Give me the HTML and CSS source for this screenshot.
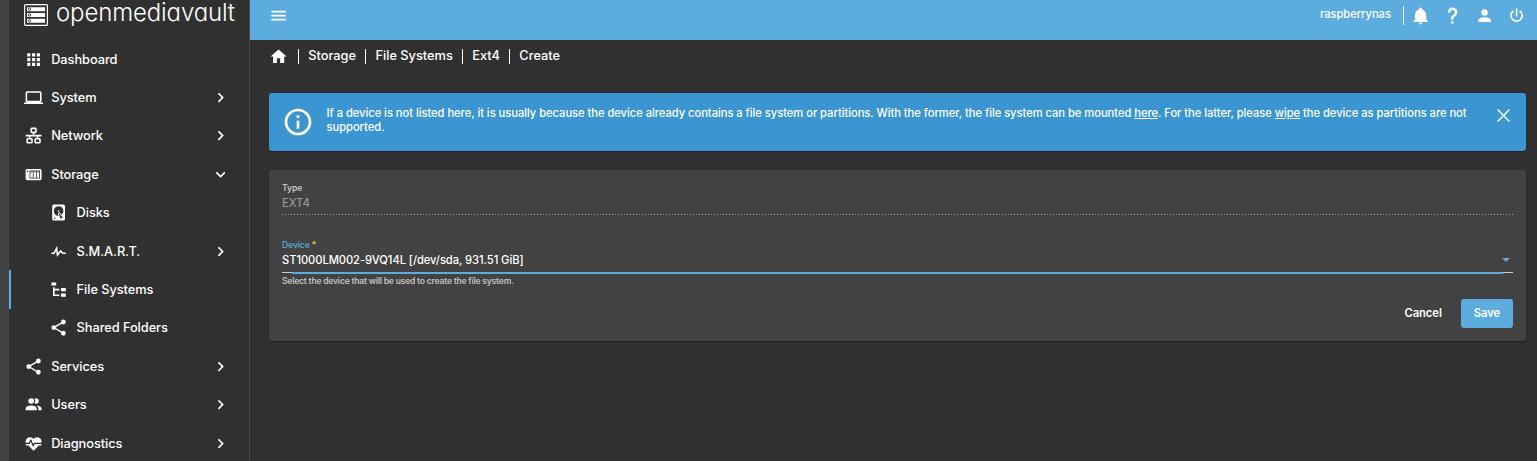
FILE: index.html
```
<!DOCTYPE html>
<html lang="en">
<head>
<meta charset="utf-8">
<title>openmediavault</title>
<link rel="stylesheet" href="styles.css">
</head>
<body>
<div class="app">
  <nav class="sidebar">
    <div class="logo">
      <svg class="logo-mark" viewBox="0 0 24 22"><rect x=".6" y=".6" width="22.8" height="20.8" rx="1" fill="none" stroke="#fff" stroke-width="1.200"/><path fill="#fff" d="M3 3.200h18v4H3zM3 9h18v4H3zM3 14.800h18v4H3z"/><g fill="#fff" stroke="#303030" stroke-width=".9"><circle cx="5.500" cy="5.200" r="1.200"/><circle cx="5.500" cy="11" r="1.200"/><circle cx="5.500" cy="16.800" r="1.200"/></g></svg>
      <span class="logo-text">openmediavault</span>
    </div>
    <a class="item"><svg class="icon" viewBox="0 0 24 24"><path d="M16,20H20V16H16M16,14H20V10H16M10,8H14V4H10M16,8H20V4H16M10,14H14V10H10M4,14H8V10H4M4,20H8V16H4M10,20H14V16H10M4,8H8V4H4V8Z"/></svg><span>Dashboard</span></a>
    <a class="item"><svg class="icon" viewBox="0 0 24 24"><path d="M4,6H20V16H4M20,18A2,2 0 0,0 22,16V6C22,4.890 21.100,4 20,4H4C2.890,4 2,4.890 2,6V16A2,2 0 0,0 4,18H0V20H24V18H20Z"/></svg><span>System</span><svg class="chev" viewBox="0 0 24 24"><path d="M8.590,16.580L13.170,12L8.590,7.410L10,6L16,12L10,18L8.590,16.580Z"/></svg></a>
    <a class="item"><svg class="icon" viewBox="0 0 24 24"><path d="M10,2C8.890,2 8,2.890 8,4V7C8,8.110 8.890,9 10,9H11V11H2V13H6V15H5C3.890,15 3,15.890 3,17V20C3,21.110 3.890,22 5,22H9C10.110,22 11,21.110 11,20V17C11,15.890 10.110,15 9,15H8V13H16V15H15C13.890,15 13,15.890 13,17V20C13,21.110 13.890,22 15,22H19C20.110,22 21,21.110 21,20V17C21,15.890 20.110,15 19,15H18V13H22V11H13V9H14C15.110,9 16,8.110 16,7V4C16,2.890 15.110,2 14,2H10M10,4H14V7H10V4M5,17H9V20H5V17M15,17H19V20H15V17Z"/></svg><span>Network</span><svg class="chev" viewBox="0 0 24 24"><path d="M8.590,16.580L13.170,12L8.590,7.410L10,6L16,12L10,18L8.590,16.580Z"/></svg></a>
    <a class="item"><svg class="icon" viewBox="0 0 24 24"><path fill-rule="evenodd" d="M4,5C2.890,5 2,5.890 2,7V17C2,18.110 2.890,19 4,19H20C21.110,19 22,18.110 22,17V7C22,5.890 21.110,5 20,5H4M4.500,7A1,1 0 0,1 5.500,8A1,1 0 0,1 4.500,9A1,1 0 0,1 3.500,8A1,1 0 0,1 4.500,7M7,7H20V17H7V7M8,8V16H11V8H8M12,8V16H15V8H12M16,8V16H19V8H16M9,9H10V10H9V9M13,9H14V10H13V9M17,9H18V10H17V9Z"/></svg><span>Storage</span><svg class="chev" viewBox="0 0 24 24"><path d="M7.410,8.580L12,13.170L16.590,8.580L18,10L12,16L6,10L7.410,8.580Z"/></svg></a>
    <a class="item sub"><svg class="icon" viewBox="0 0 24 24"><path d="M6,2H18A2,2 0 0,1 20,4V20A2,2 0 0,1 18,22H6A2,2 0 0,1 4,20V4A2,2 0 0,1 6,2M12,4A6,6 0 0,0 6,10C6,13.310 8.690,16 12.100,16L11.220,13.770C10.950,13.290 11.110,12.680 11.590,12.400L12.450,11.900C12.930,11.630 13.540,11.790 13.820,12.270L15.740,14.690C17.120,13.590 18,11.900 18,10A6,6 0 0,0 12,4M12,9A1,1 0 0,1 13,10A1,1 0 0,1 12,11A1,1 0 0,1 11,10A1,1 0 0,1 12,9M7,18A1,1 0 0,0 6,19A1,1 0 0,0 7,20A1,1 0 0,0 8,19A1,1 0 0,0 7,18M12.090,13.270L14.580,19.580L17.170,18.080L12.950,12.770L12.090,13.270Z"/></svg><span>Disks</span></a>
    <a class="item sub"><svg class="icon" viewBox="0 0 24 24"><path d="M3,13H5.790L10.100,4.790L11.280,13.750L14.500,9.660L17.830,13H21V15H17L14.670,12.670L9.920,18.730L8.940,11.310L7,15H3V13Z"/></svg><span>S.M.A.R.T.</span><svg class="chev" viewBox="0 0 24 24"><path d="M8.590,16.580L13.170,12L8.590,7.410L10,6L16,12L10,18L8.590,16.580Z"/></svg></a>
    <a class="item sub active"><svg class="icon" viewBox="0 0 24 24"><path d="M3,3H9V7H3V3M15,10H21V14H15V10M15,17H21V21H15V17M13,13H7V18H13V20H7L5,20V9H7V11H13V13Z"/></svg><span>File Systems</span></a>
    <a class="item sub"><svg class="icon" viewBox="0 0 24 24"><path d="M18,16.080C17.240,16.080 16.560,16.380 16.040,16.850L8.910,12.700C8.960,12.470 9,12.240 9,12C9,11.760 8.960,11.530 8.910,11.300L15.960,7.190C16.500,7.690 17.210,8 18,8A3,3 0 0,0 21,5A3,3 0 0,0 18,2A3,3 0 0,0 15,5C15,5.240 15.040,5.470 15.090,5.700L8.040,9.810C7.500,9.310 6.790,9 6,9A3,3 0 0,0 3,12A3,3 0 0,0 6,15C6.790,15 7.500,14.690 8.040,14.190L15.160,18.340C15.110,18.550 15.080,18.770 15.080,19C15.080,20.610 16.390,21.910 18,21.910C19.610,21.910 20.920,20.610 20.920,19A2.920,2.920 0 0,0 18,16.080Z"/></svg><span>Shared Folders</span></a>
    <a class="item"><svg class="icon" viewBox="0 0 24 24"><path d="M18,16.080C17.240,16.080 16.560,16.380 16.040,16.850L8.910,12.700C8.960,12.470 9,12.240 9,12C9,11.760 8.960,11.530 8.910,11.300L15.960,7.190C16.500,7.690 17.210,8 18,8A3,3 0 0,0 21,5A3,3 0 0,0 18,2A3,3 0 0,0 15,5C15,5.240 15.040,5.470 15.090,5.700L8.040,9.810C7.500,9.310 6.790,9 6,9A3,3 0 0,0 3,12A3,3 0 0,0 6,15C6.790,15 7.500,14.690 8.040,14.190L15.160,18.340C15.110,18.550 15.080,18.770 15.080,19C15.080,20.610 16.390,21.910 18,21.910C19.610,21.910 20.920,20.610 20.920,19A2.920,2.920 0 0,0 18,16.080Z"/></svg><span>Services</span><svg class="chev" viewBox="0 0 24 24"><path d="M8.590,16.580L13.170,12L8.590,7.410L10,6L16,12L10,18L8.590,16.580Z"/></svg></a>
    <a class="item"><svg class="icon" viewBox="0 0 24 24"><path d="M16 17V19H2V17S2 13 9 13 16 17 16 17M12.500 7.500A3.500 3.500 0 1 0 9 11A3.500 3.500 0 0 0 12.500 7.500M15.940 13A5.320 5.320 0 0 1 18 17V19H22V17S22 13.370 15.940 13M15 4A3.390 3.390 0 0 0 13.070 4.590A5 5 0 0 1 13.070 10.410A3.390 3.390 0 0 0 15 11A3.500 3.500 0 0 0 15 4Z"/></svg><span>Users</span><svg class="chev" viewBox="0 0 24 24"><path d="M8.590,16.580L13.170,12L8.590,7.410L10,6L16,12L10,18L8.590,16.580Z"/></svg></a>
    <a class="item"><svg class="icon" viewBox="0 0 24 24"><path d="M7.500,4A5.500,5.500 0 0,0 2,9.500C2,10 2.090,10.500 2.220,11H6.300L7.570,7.630C7.870,6.830 9.050,6.750 9.430,7.630L11.500,13L12.090,11.580C12.220,11.250 12.570,11 13,11H21.780C21.910,10.500 22,10 22,9.500A5.500,5.500 0 0,0 16.500,4C14.640,4 13,4.930 12,6.340C11,4.930 9.360,4 7.500,4M3,12.500A1,1 0 0,0 2,13.500A1,1 0 0,0 3,14.500H5.440L11,20C12,20.900 12,20.900 13,20L18.560,14.500H21A1,1 0 0,0 22,13.500A1,1 0 0,0 21,12.500H13.400L12.470,14.800C12.070,15.810 10.920,15.670 10.550,14.830L8.500,9.500L7.540,11.830C7.390,12.210 7.050,12.500 6.600,12.500H3Z"/></svg><span>Diagnostics</span><svg class="chev" viewBox="0 0 24 24"><path d="M8.590,16.580L13.170,12L8.590,7.410L10,6L16,12L10,18L8.590,16.580Z"/></svg></a>
  </nav>
  <div class="content">
    <header class="topbar">
      <svg class="icon" viewBox="0 0 24 24"><path d="M3,6H21V8H3V6M3,11H21V13H3V11M3,16H21V18H3V16Z"/></svg>
      <span class="host">raspberrynas</span>
      <div class="actions">
        <svg class="icon" viewBox="0 0 24 24"><path d="M21,19V20H3V19L5,17V11C5,7.900 7.030,5.170 10,4.290C10,4.190 10,4.100 10,4A2,2 0 0,1 12,2A2,2 0 0,1 14,4C14,4.100 14,4.190 14,4.290C16.970,5.170 19,7.900 19,11V17L21,19M14,21A2,2 0 0,1 12,23A2,2 0 0,1 10,21"/></svg>
        <svg class="icon" viewBox="0 0 24 24"><path d="M10,19H13V22H10V19M12,2C17.350,2.220 19.680,7.620 16.500,11.670C15.670,12.670 14.330,13.330 13.670,14.170C13,15 13,16 13,17H10C10,15.330 10,13.920 10.670,12.920C11.330,11.920 12.670,11.330 13.500,10.670C15.920,8.430 15.320,5.260 12,5A3,3 0 0,0 9,8H6A6,6 0 0,1 12,2Z"/></svg>
        <svg class="icon" viewBox="0 0 24 24"><path d="M12,4A4,4 0 0,1 16,8A4,4 0 0,1 12,12A4,4 0 0,1 8,8A4,4 0 0,1 12,4M12,14C16.420,14 20,15.790 20,18V20H4V18C4,15.790 7.580,14 12,14Z"/></svg>
        <svg class="icon" viewBox="0 0 24 24"><path d="M16.560,5.440L15.110,6.890C16.840,7.940 18,9.830 18,12A6,6 0 0,1 12,18A6,6 0 0,1 6,12C6,9.830 7.160,7.940 8.880,6.880L7.440,5.440C5.360,6.880 4,9.280 4,12A8,8 0 0,0 12,20A8,8 0 0,0 20,12C20,9.280 18.640,6.880 16.560,5.440M13,3H11V13H13"/></svg>
      </div>
    </header>
    <div class="crumbs">
      <svg class="icon" viewBox="0 0 24 24"><path d="M10,20V14H14V20H19V12H22L12,3L2,12H5V20H10Z"/></svg>
      <span class="crumb">Storage</span><span class="crumb">File Systems</span><span class="crumb">Ext4</span><span class="crumb">Create</span>
    </div>
    <section class="banner">
      <svg class="info" viewBox="0 0 24 24"><path d="M11,9H13V7H11M12,20C7.590,20 4,16.410 4,12C4,7.590 7.590,4 12,4C16.410,4 20,7.590 20,12C20,16.410 16.410,20 12,20M12,2A10,10 0 0,0 2,12A10,10 0 0,0 12,22A10,10 0 0,0 22,12A10,10 0 0,0 12,2M11,17H13V11H11V17Z"/></svg>
      <p class="message">If a device is not listed here, it is usually because the device already contains a file system or partitions. With the former, the file system can be mounted <a class="link">here</a>. For the latter, please <a class="link">wipe</a> the device as partitions are not supported.</p>
      <svg class="close" viewBox="0 0 12 12"><path d="M.5.5l11 11M11.500.5l-11 11"/></svg>
    </section>
    <section class="card">
      <div class="label">Type</div>
      <div class="value disabled">EXT4</div>
      <div class="label device-label">Device <span class="required">*</span></div>
      <div class="value select"><span>ST1000LM002-9VQ14L [/dev/sda, 931.51 GiB]</span><i class="arrow"></i></div>
      <div class="hint">Select the device that will be used to create the file system.</div>
      <div class="buttons"><button class="btn cancel">Cancel</button><button class="btn primary">Save</button></div>
    </section>
  </div>
</div>
</body>
</html>
```

FILE: styles.css
```
* { box-sizing: border-box; }
body { margin: 0; height: 461px; overflow: hidden; background: #303030; color: #fff; font: 500 12.8px/16px Inter, sans-serif; }
svg { display: block; flex: none; fill: currentColor; }
.app { display: flex; height: 461px; }
.sidebar { width: 250px; flex: none; border-left: 9px solid #424242; border-right: 1px solid #4a4a4a; }
.logo { height: 40px; display: flex; padding: 4px 0 0 15px; }
.logo-mark { width: 24px; height: 22px; }
.logo-text { margin-left: 8px; margin-top: -3px; font-size: 24px; font-weight: 300; line-height: 24px; letter-spacing: -.13px; font-feature-settings: "cv11"; white-space: nowrap; }
.item { display: flex; align-items: center; height: 38.400px; padding: 0 19px 0 15px; }
.item.sub { padding-left: 40px; }
.item.active { box-shadow: inset 2px 0 #5dabdf; }
.icon { width: 19.200px; height: 19.200px; }
.item span { margin-left: 8px; padding-top: 1px; letter-spacing: -.06px; }
.sub span { margin-left: 8.400px; }
.chev { width: 19.200px; height: 19.200px; margin-left: auto; }
.content { flex: 1; min-width: 0; }
.topbar { height: 40px; background: #5dacdf; display: flex; padding: 6px 11px 0 19px; }
.host { margin-left: auto; margin-right: 12px; font-size: 11.200px; letter-spacing: -.06px; }
.actions { display: flex; gap: 12.800px; height: 19px; border-left: 1px solid #fff; padding-left: 7px; }
.crumbs { display: flex; align-items: center; height: 32px; padding-left: 19px; }
.crumbs .icon { margin-right: 10px; margin-top: 2px; }
.crumb { border-left: 1px solid #fff; padding: 0 9.400px 0 9px; height: 15px; line-height: 14px; }
.banner { margin: 21px 11px 0 19px; height: 58px; border-radius: 3px; background: #3b95d0; display: flex; padding: 13px 16px 0 13px; font-size: 11.200px; line-height: 14px; box-shadow: 0 1px 1px #222; }
.info { width: 32px; height: 32px; }
.message { margin: 0 0 0 12.500px; flex: 1; padding-right: 20px; letter-spacing: -.045px; }
.link { text-decoration: underline; }
.close { width: 13px; height: 13px; margin-top: 3px; fill: none; stroke: #fff; stroke-width: 1.300; }
.card { margin: 19px 11px 0 19px; height: 171px; border-radius: 3px; background: #424242; padding: 12px 13px; box-shadow: 0 1px 1px #222; }
.label { font-size: 8.600px; line-height: 12px; color: #c6c6c6; letter-spacing: -.1px; font-weight: 600; }
.value { font-size: 11.200px; line-height: 16px; letter-spacing: -.07px; }
.disabled { color: #969696; height: 21px; padding-top: 1px; background: repeating-linear-gradient(90deg, #aaa 0 1px, transparent 1px 3px) 0 100% / 100% 1px no-repeat; }
.device-label { margin-top: 24px; color: #5dacdf; font-weight: 500; }
.required { color: #ffd028; }
.select { display: flex; justify-content: space-between; height: 23px; padding: 1px 2px 0 0; background: linear-gradient(#5dacdf, #5dacdf) 10px 100% / calc(100% - 20px) 2px no-repeat, linear-gradient(#ccc, #ccc) 0 calc(100% - 1px) / 100% 1px no-repeat; }
.arrow { width: 0; height: 0; margin-top: 6px; margin-right: 1px; border: 4px solid transparent; border-top-color: #5dacdf; border-bottom: 0; }
.hint { font-size: 8.600px; line-height: 12px; color: #c0c0c0; margin-top: 1px; font-weight: 600; letter-spacing: -.23px; }
.buttons { display: flex; justify-content: flex-end; gap: 6px; margin-top: 12px; }
.btn { font: 600 11.200px/16px Inter, sans-serif; letter-spacing: -.06px; color: #fff; background: none; border: 0; height: 29px; padding: 0 13px 1px; border-radius: 3px; }
.primary { background: #5dacdf; }
```
